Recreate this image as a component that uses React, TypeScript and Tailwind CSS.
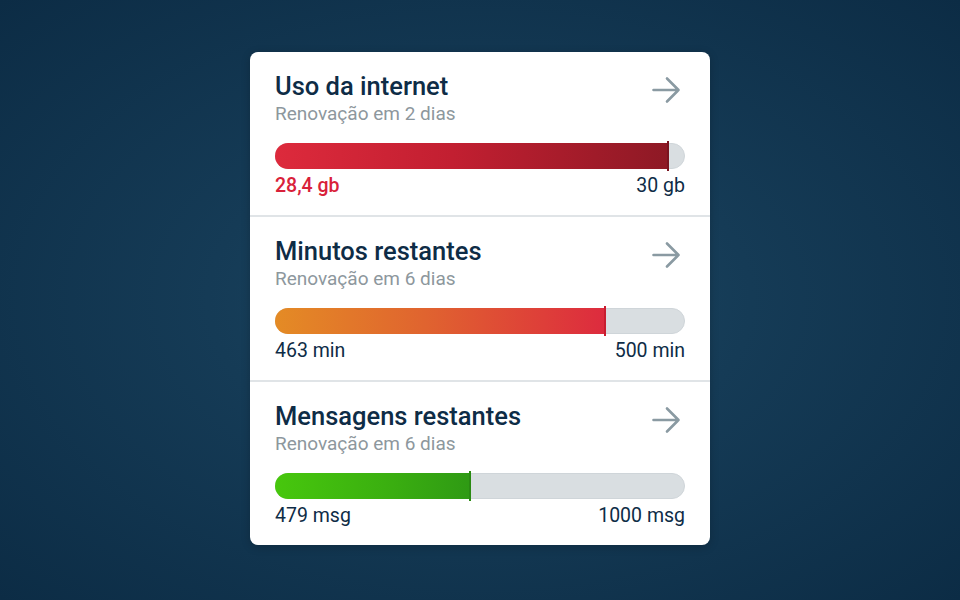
import React from "react";

interface Usage {
    title: string;
    subtitle: string;
    used: string;
    total: string;
    fill: number;
    gradient: string;
    marker: string;
    usedClass: string;
}

const items: Usage[] = [
    {
        title: "Uso da internet",
        subtitle: "Renovação em 2 dias",
        used: "28,4 gb",
        total: "30 gb",
        fill: 96.3,
        gradient: "bg-[linear-gradient(90deg,#dd2a3c_0%,#c21f31_45%,#8e1925_100%)]",
        marker: "bg-[#7a1420]",
        usedClass: "text-[#d9213a] font-medium",
    },
    {
        title: "Minutos restantes",
        subtitle: "Renovação em 6 dias",
        used: "463 min",
        total: "500 min",
        fill: 80.8,
        gradient: "bg-[linear-gradient(90deg,#e48b25_0%,#e0642f_45%,#dd2b3e_100%)]",
        marker: "bg-[#c81d30]",
        usedClass: "text-[#0e2c46]",
    },
    {
        title: "Mensagens restantes",
        subtitle: "Renovação em 6 dias",
        used: "479 msg",
        total: "1000 msg",
        fill: 47.8,
        gradient: "bg-[linear-gradient(90deg,#47c70d_0%,#3aae10_60%,#2f9a14_100%)]",
        marker: "bg-[#2a8a12]",
        usedClass: "text-[#0e2c46]",
    },
];

function Arrow() {
    return (
        <svg width="30" height="30" viewBox="0 0 30 30" fill="none" className="mt-[4px]">
            <path
                d="M2.5 15H27.5M16 3.5L27.5 15L16 26.5"
                stroke="#8a9aa2"
                strokeWidth="2.6"
                strokeLinecap="round"
                strokeLinejoin="round"
            />
        </svg>
    );
}

function UsageRow({ item }: { item: Usage }) {
    return (
        <div className="px-[25px] pt-[19px] pb-[17px]">
            <div className="flex items-start justify-between">
                <div>
                    <h2 className="text-[25.5px] leading-[30px] font-medium text-[#0e2c46]">{item.title}</h2>
                    <p className="mt-[2px] text-[19px] leading-[22px] text-[#8d979d]">{item.subtitle}</p>
                </div>
                <div className="mr-[4px]">
                    <Arrow />
                </div>
            </div>
            <div className="relative mt-[18px] h-[26px] rounded-full bg-[#d9dee1] border border-[#cfd5d9]">
                <div
                    className={`absolute -left-px -top-px -bottom-px rounded-l-full ${item.gradient}`}
                    style={{ width: `${item.fill}%` }}
                />
                <div
                    className={`absolute -top-[3px] -bottom-[3px] w-[2px] ${item.marker}`}
                    style={{ left: `calc(${item.fill}% - 2px)` }}
                />
            </div>
            <div className="mt-[5px] flex justify-between text-[19.5px] leading-[24px]">
                <span className={item.usedClass}>{item.used}</span>
                <span className="text-[#0e2c46]">{item.total}</span>
            </div>
        </div>
    );
}

export default function App() {
    return (
        <div className="w-[960px] h-[600px] flex items-center justify-center bg-[radial-gradient(ellipse_at_center,#1c4762_0%,#153b56_40%,#0c2c45_100%)] font-['Roboto',sans-serif]">
            <div className="w-[460px] bg-white rounded-[8px] overflow-hidden shadow-[0_2px_10px_rgba(0,0,0,0.2)] divide-y-2 divide-[#e0e4e7] -mt-[3px]">
                {items.map((item) => (
                    <UsageRow key={item.title} item={item} />
                ))}
            </div>
        </div>
    );
}
